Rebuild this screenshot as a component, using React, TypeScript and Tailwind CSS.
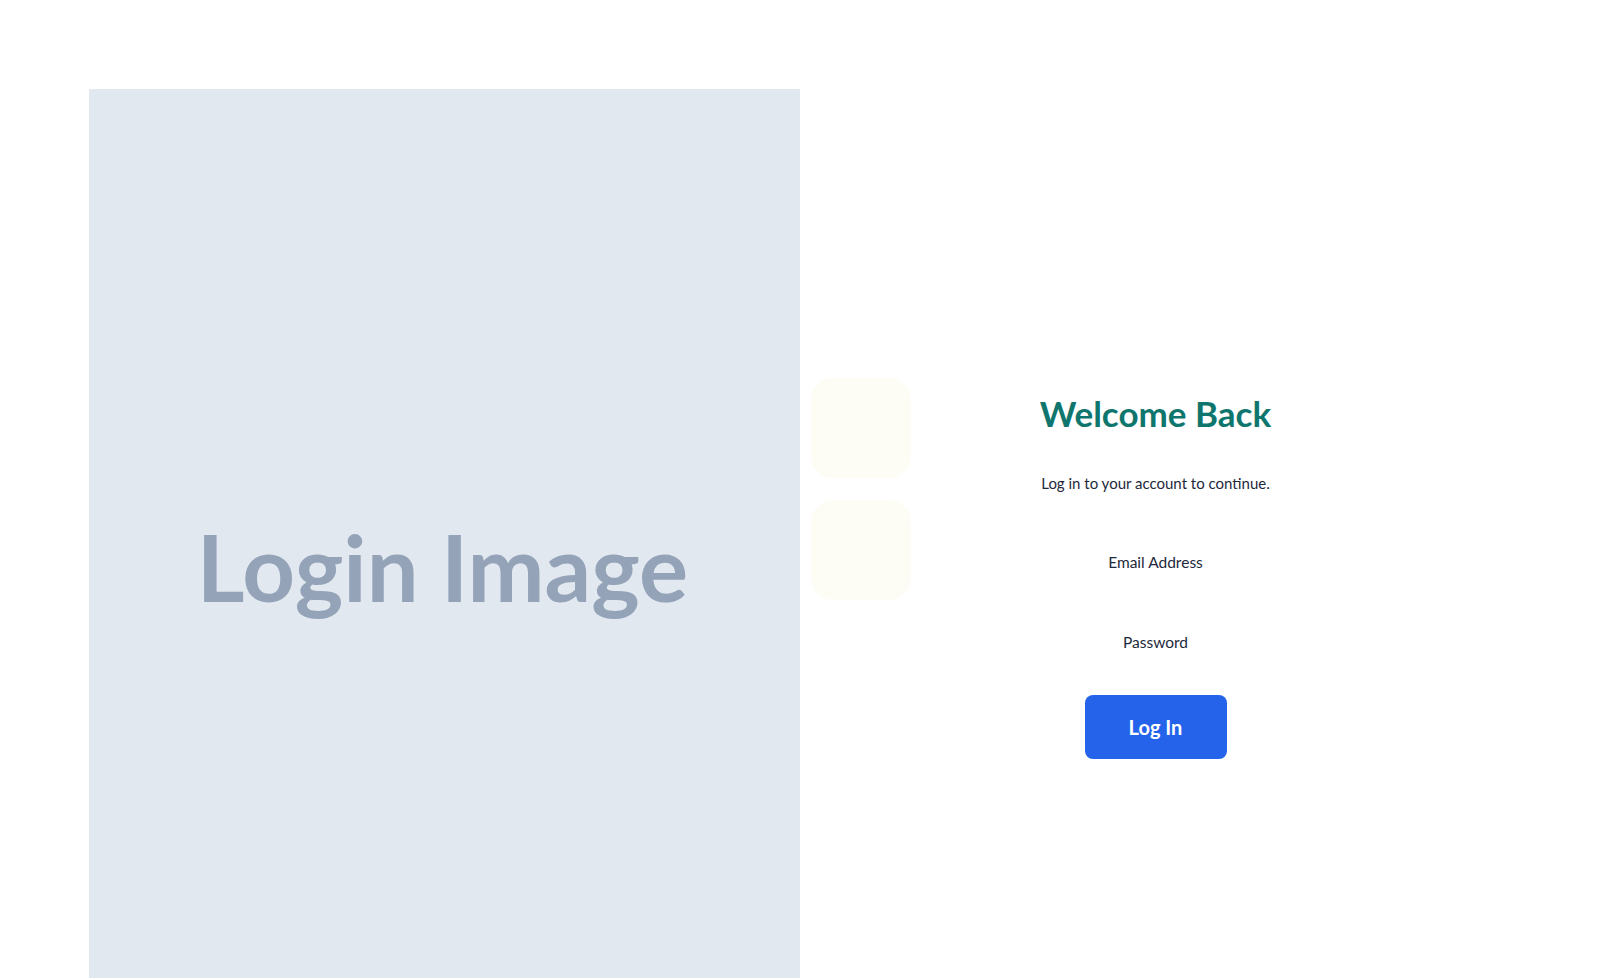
import React from 'react';

const App: React.FC = () => {
  return (
    <div className="min-h-screen bg-white overflow-hidden">
      <div className="mx-auto w-[1422px] pt-[89px] grid grid-cols-2">
        {/* Image placeholder */}
        <div className="h-[978px] pb-[22px] pr-[4px] bg-[#e2e8f0] flex items-center justify-center">
          <span className="font-['Lato',sans-serif] font-bold text-[92px] leading-none text-[#94a3b8]">
            Login Image
          </span>
        </div>

        {/* Form side */}
        <div className="relative h-[978px] pt-[304px] flex flex-col items-center font-['Lato',sans-serif]">
          {/* decorative tiles */}
          <div className="absolute left-[11px] top-[289px] flex flex-col gap-[22px]">
            <div className="w-[100px] h-[100px] rounded-[22px] bg-[#fdfcf5]" />
            <div className="w-[100px] h-[100px] rounded-[22px] bg-[#fdfcf5]" />
          </div>

          <h1 className="text-[35px] leading-10 font-bold text-[#0f766e]">Welcome Back</h1>
          <p className="mt-[38px] text-[15px] leading-6 text-[#1e293b]">Log in to your account to continue.</p>

          <form className="mt-[55px] flex flex-col items-center">
            <label className="text-[15.5px] leading-6 text-[#1e293b]">Email Address</label>
            <input type="email" className="w-[240px] h-[56px] bg-transparent outline-none" />
            <label className="text-[15.5px] leading-6 text-[#1e293b]">Password</label>
            <input type="password" className="w-[240px] h-[41px] bg-transparent outline-none" />
            <button
              type="button"
              className="w-[142px] h-[64px] rounded-lg bg-[#2563eb] text-white text-[20px] font-bold"
            >
              Log In
            </button>
          </form>
        </div>
      </div>
    </div>
  );
};

export default App;
